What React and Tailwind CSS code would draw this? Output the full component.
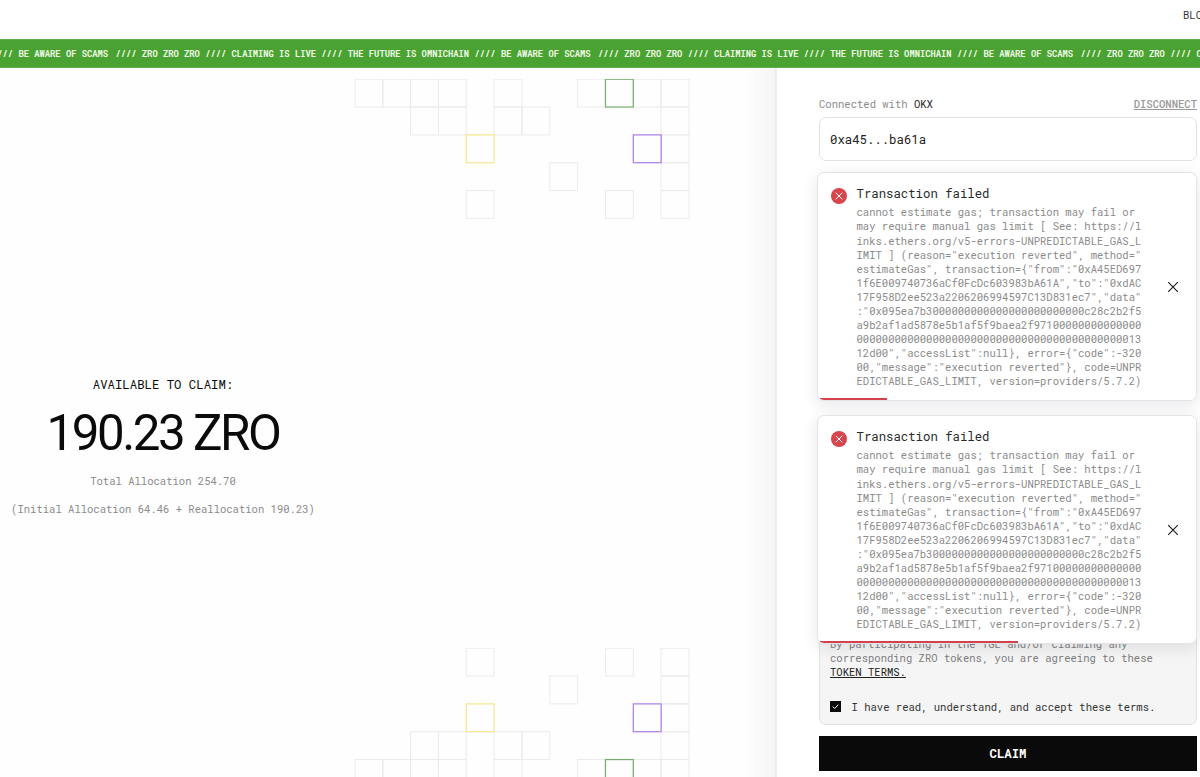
import React from "react";

const CELL = 27.84;

const GRAY_CELLS = [
  [0, 0], [1, 0], [2, 0], [3, 0], [5, 0], [8, 0], [10, 0], [11, 0],
  [2, 1], [3, 1], [5, 1], [6, 1], [11, 1],
  [11, 2],
  [7, 3], [11, 3],
  [4, 4], [9, 4], [11, 4],
];

const COLOR_CELLS = [
  { col: 9, row: 0, stroke: "#72ae69" },
  { col: 4, row: 2, stroke: "#f6e68c" },
  { col: 10, row: 2, stroke: "#aa7ce6" },
];

const ERROR_LINES = [
  "cannot estimate gas; transaction may fail or",
  "may require manual gas limit [ See: https://l",
  "inks.ethers.org/v5-errors-UNPREDICTABLE_GAS_L",
  'IMIT ] (reason="execution reverted", method="',
  'estimateGas", transaction={"from":"0xA45ED697',
  '1f6E009740736aCf0FcDc603983bA61A","to":"0xdAC',
  '17F958D2ee523a2206206994597C13D831ec7","data"',
  ':"0x095ea7b3000000000000000000000000c28c2b2f5',
  "a9b2af1ad5878e5b1af5f9baea2f97100000000000000",
  "000000000000000000000000000000000000000000013",
  '12d00","accessList":null}, error={"code":-320',
  '00,"message":"execution reverted"}, code=UNPR',
  "EDICTABLE_GAS_LIMIT, version=providers/5.7.2)",
];

function Squares({ flipped = false }) {
  const y = (row) => 0.5 + (flipped ? 4 - row : row) * CELL;
  return (
    <svg width="336" height="141" viewBox="-0.4 0.3 336 141" fill="none" className="ml-[354px] shrink-0">
      {GRAY_CELLS.map(([col, row]) => (
        <rect key={`${col}-${row}`} x={0.5 + col * CELL} y={y(row)} width={CELL} height={CELL} stroke="#ebebeb" />
      ))}
      {COLOR_CELLS.map(({ col, row, stroke }) => (
        <rect key={stroke} x={0.5 + col * CELL} y={y(row)} width={CELL} height={CELL} stroke={stroke} strokeWidth="1.2" />
      ))}
    </svg>
  );
}

function TickerItems() {
  return (
    <span className="inline-block w-[482.5px] shrink-0">
      BE AWARE OF SCAMS<span className="ml-[2px]"> //// </span>ZRO ZRO ZRO //// CLAIMING IS LIVE //// THE FUTURE IS OMNICHAIN ////
    </span>
  );
}

function Ticker() {
  return (
    <div className="flex h-[29px] items-center overflow-hidden border-y border-[#5fae4d] bg-[#4aa232] text-[8.8px] font-bold whitespace-pre text-[#effbe6]">
      <div className="-ml-[8px] flex pt-px">
        <span className="w-[26.4px] shrink-0">{"//// "}</span>
        <TickerItems />
        <TickerItems />
        <TickerItems />
      </div>
    </div>
  );
}

function Toast({ progress }) {
  return (
    <div className="relative flex h-[229px] overflow-hidden rounded-[7px] border border-[#e4e4e8] bg-white pl-[12.5px] shadow-[0_4px_16px_rgba(20,20,50,0.1)]">
      <svg width="16" height="16" viewBox="0 0 16 16" fill="none" className="mt-[15px] shrink-0">
        <circle cx="8" cy="8" r="8" fill="#d8454c" />
        <path d="M4.7 4.7l6.6 6.6M11.3 4.7l-6.6 6.6" stroke="#fff" strokeWidth="1" />
      </svg>
      <div className="ml-[10px] w-[300px] pt-[11px]">
        <div className="h-[21px] text-[12.32px] leading-[18px] text-[#2a2a2a]">Transaction failed</div>
        <div className="text-[10.56px] leading-[14.08px] whitespace-pre text-[#8b8b8b]">
          {ERROR_LINES.map((line) => (
            <div key={line}>{line}</div>
          ))}
        </div>
      </div>
      <svg width="12" height="12" viewBox="0 0 12 12" fill="none" className="ml-[10.5px] shrink-0 self-center">
        <path d="M1.2 1.2l9.6 9.6M10.8 1.2l-9.6 9.6" stroke="#222" strokeWidth="1.2" />
      </svg>
      <div className="absolute bottom-0 left-[2px] h-[2px] bg-[#d3424c]" style={{ width: progress }} />
    </div>
  );
}

export default function App() {
  return (
    <div className="flex h-[777px] w-[1200px] flex-col overflow-hidden bg-white font-['Roboto_Mono','Liberation_Mono',monospace]">
      <header className="flex h-[39px] shrink-0 justify-end overflow-hidden">
        <span className="w-[17px] pt-[7px] text-[10.56px] leading-[16px] whitespace-nowrap text-[#333]">BLOG</span>
      </header>
      <Ticker />
      <div className="flex min-h-0 flex-1">
        <main className="flex w-[777px] shrink-0 flex-col overflow-hidden border-r-2 border-[#ececec] bg-[linear-gradient(to_right,#fefefe_0,#fefefe_745px,#f5f5f5_775px)] pt-[11px]">
          <Squares />
          <div className="flex h-[428px] w-[326px] shrink-0 flex-col items-center pt-[155px] whitespace-nowrap">
            <div className="text-[12.32px] leading-[18px] text-[#0a0a0a]">AVAILABLE TO CLAIM:</div>
            <div className="mt-[10px] h-[60px] font-['Roboto',sans-serif] text-[49.28px] leading-[60px] tracking-[-0.05em] text-[#0a0a0a]">190.23 ZRO</div>
            <div className="mt-[11px] text-[10.56px] leading-[14px] text-[#8b8b8b]">Total Allocation 254.70</div>
            <div className="mt-[14px] text-[10.56px] leading-[14px] text-[#8b8b8b]">(Initial Allocation 64.46 + Reallocation 190.23)</div>
          </div>
          <Squares flipped />
        </main>
        <aside className="relative flex flex-1 flex-col pt-[28px] pr-[3px] pl-[42px]">
          <div className="flex h-[21px] justify-between text-[10.56px] leading-[16px]">
            <span className="text-[#8b8b8b]">
              Connected with <span className="text-[#222]">OKX</span>
            </span>
            <span className="font-medium text-[#999] underline underline-offset-1">DISCONNECT</span>
          </div>
          <div className="flex h-[44px] items-center rounded-[7px] border border-[#e2e2e2] px-[10px] text-[12.32px] text-[#222]">0xa45...ba61a</div>
          <div className="mt-[282px] flex h-[282px] flex-col justify-end rounded-[7px] border border-[#e2e2e2] bg-[#f5f5f5] px-[10px] pb-[10px] text-[10.56px] leading-[14.08px]">
            <p className="whitespace-nowrap text-[#7e7e7e]">
              By participating in the TGE and/or claiming any<br />
              corresponding ZRO tokens, you are agreeing to these<br />
              <span className="text-[#222] underline underline-offset-1">TOKEN TERMS.</span>
            </p>
            <div className="mt-[21px] flex items-center gap-[10.5px] text-[#333]">
              <svg width="11" height="11" viewBox="0 0 11 11" fill="none" className="shrink-0">
                <rect width="11" height="11" fill="#0a0a0a" />
                <path d="M2.8 5.6l1.9 1.9 3.6-3.8" stroke="#fff" />
              </svg>
              <span className="whitespace-nowrap">I have read, understand, and accept these terms.</span>
            </div>
          </div>
          <button className="mt-[11px] h-[35px] bg-[#0a0a0a] text-[12.32px] font-bold text-white">CLAIM</button>
          <div className="absolute top-[104.4px] right-[3px] left-[40px] flex flex-col gap-[14px]">
            <Toast progress="67px" />
            <Toast progress="198px" />
          </div>
        </aside>
      </div>
    </div>
  );
}
